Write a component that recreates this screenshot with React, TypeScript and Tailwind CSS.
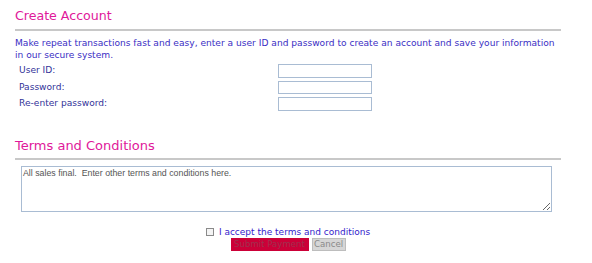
import { useState } from 'react';

const sans = "font-['DejaVu_Sans',Verdana,sans-serif]";

export default function App() {
  const [accepted, setAccepted] = useState(false);

  return (
    <div className={`min-h-[263px] w-[592px] bg-white ${sans}`}>
      <div className="ml-[15px] w-[546px] pt-[6px]">
        <h2 className="text-[12.6px] leading-[20px] text-[#e0189a]">Create Account</h2>
        <div className="mt-[3px] h-[2px] bg-[#c8c8c8]" />
        <p className="mt-[7px] pr-[6px] text-[9.1px] leading-[11.5px] text-[#3a2ec4]">
          Make repeat transactions fast and easy, enter a user ID and password to create an account and save your information in our secure system.
        </p>
        <div className="mt-[3px] ml-[4px] grid grid-cols-[259px_94px] gap-y-[3px] text-[9.1px] text-[#333399]">
          <label className="flex items-center">User ID:</label>
          <input className="h-[13.5px] border border-[#a9bcd3] bg-white outline-none" />
          <label className="flex items-center">Password:</label>
          <input type="password" className="h-[13.5px] border border-[#a9bcd3] bg-white outline-none" />
          <label className="flex items-center">Re-enter password:</label>
          <input type="password" className="h-[13.5px] border border-[#a9bcd3] bg-white outline-none" />
        </div>

        <h2 className="mt-[25px] text-[13px] leading-[20px] text-[#e0189a]">Terms and Conditions</h2>
        <div className="mt-[2px] h-[2px] bg-[#c8c8c8]" />
        <textarea
          className="mt-[6px] ml-[6px] block h-[46px] w-[531px] resize border border-[#a9bcd3] px-[1px] py-[1px] font-['Liberation_Sans',Arial,sans-serif] text-[8.8px] leading-[11px] text-[#555] outline-none"
          defaultValue="All sales final.  Enter other terms and conditions here."
        />

        <div className="mt-[14px] flex flex-col items-center">
          <label className="flex items-center gap-[5px] text-[9px] leading-[12px] text-[#3322cc]">
            <input
              type="checkbox"
              checked={accepted}
              onChange={(e) => setAccepted(e.target.checked)}
              className="m-0 h-[8px] w-[8px] appearance-none border border-[#8a8a8a] bg-[#f4f4f4] checked:bg-[#3322cc]"
            />
            I accept the terms and conditions
          </label>
          <div className="mt-[0px] flex gap-[3px]">
            <button className="h-[13px] w-[78px] bg-[#cc0038] text-[8.6px] leading-[13px] text-[#a0304f]">Submit Payment</button>
            <button className="h-[13px] w-[34px] border border-[#bdbdbd] bg-[#d6d6d6] text-[8.6px] leading-[11px] text-[#8a8a8a]">Cancel</button>
          </div>
        </div>
      </div>
    </div>
  );
}
